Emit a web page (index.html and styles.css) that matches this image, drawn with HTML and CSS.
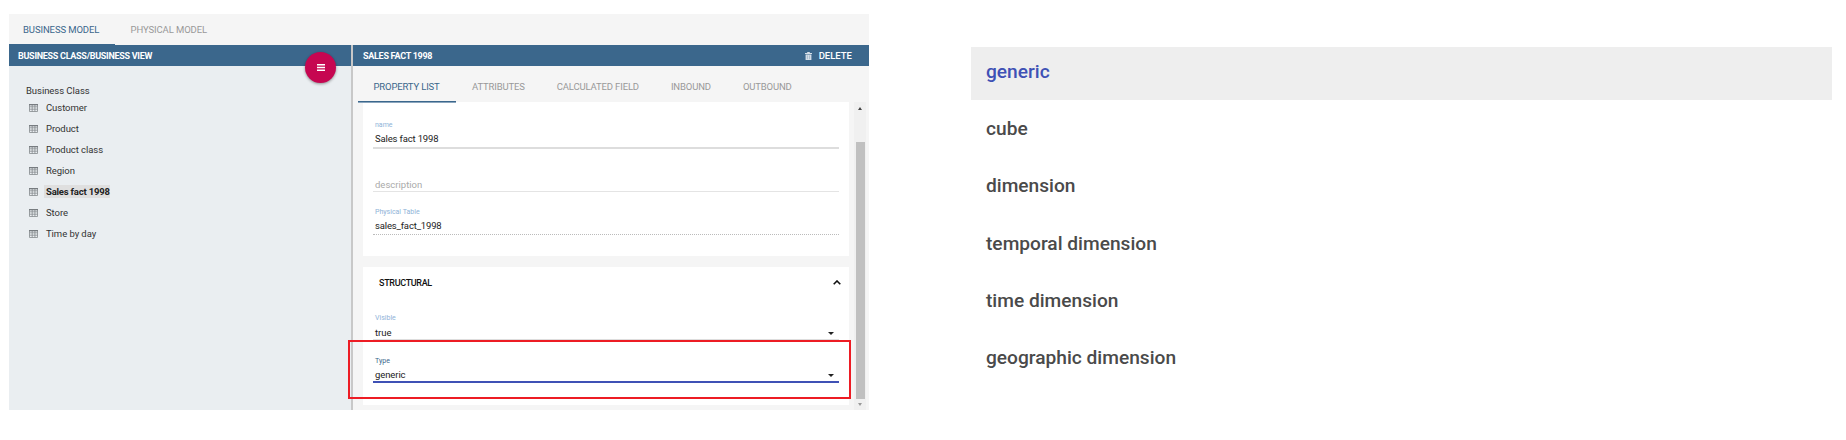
FILE: index.html
```html
<!DOCTYPE html>
<html lang="en">
<head>
<meta charset="utf-8">
<title>Business Model</title>
<link rel="stylesheet" href="styles.css">
</head>
<body>
<svg class="defs" aria-hidden="true">
  <symbol id="grid" viewBox="0 0 9 8"><path d="M.5 .5h8v7h-8zM.5 2.800h8M.5 5.200h8M3.200 1v6.500M5.900 1v6.500" fill="none" stroke="#858a8e" stroke-width=".8"/><path d="M0 0h9v1.300H0z" fill="#777c80"/></symbol>
</svg>
<main class="page">
  <section class="app">
    <nav class="model-tabs">
      <span class="model-tab active">BUSINESS MODEL</span>
      <span class="model-tab">PHYSICAL MODEL</span>
    </nav>
    <div class="panels">
      <aside class="left">
        <header class="bar">BUSINESS CLASS/BUSINESS VIEW</header>
        <button class="fab" aria-label="Menu"><svg width="8" height="7" viewBox="0 0 8 7"><path d="M0 .7h8M0 3.500h8M0 6.300h8" stroke="#fff" stroke-width="1.400"/></svg></button>
        <div class="tree-title">Business Class</div>
        <ul class="tree">
          <li><svg><use href="#grid"/></svg><span>Customer</span></li>
          <li><svg><use href="#grid"/></svg><span>Product</span></li>
          <li><svg><use href="#grid"/></svg><span>Product class</span></li>
          <li><svg><use href="#grid"/></svg><span>Region</span></li>
          <li class="selected"><svg><use href="#grid"/></svg><span>Sales fact 1998</span></li>
          <li><svg><use href="#grid"/></svg><span>Store</span></li>
          <li><svg><use href="#grid"/></svg><span>Time by day</span></li>
        </ul>
      </aside>
      <section class="right">
        <header class="bar"><span>SALES FACT 1998</span>
          <span class="delete"><svg width="7" height="8" viewBox="0 0 7 8"><path d="M0 1h2.2V0h2.6v1H7v1H0zM.6 2.6h5.8V8H.6z" fill="#d5dfe8"/><path d="M2.4 3.4v3.8M4.6 3.4v3.8" stroke="#8aa3b9" stroke-width=".6"/></svg><b>DELETE</b></span>
        </header>
        <nav class="tabs">
          <span class="tab active">PROPERTY LIST</span><span class="tab">ATTRIBUTES</span><span class="tab">CALCULATED FIELD</span><span class="tab">INBOUND</span><span class="tab">OUTBOUND</span>
        </nav>
        <div class="scroll">
          <div class="cards">
            <div class="card general">
              <div class="field name"><label>name</label><p>Sales fact 1998</p></div>
              <div class="field description"><p>description</p></div>
              <div class="field table"><label>Physical Table</label><p>sales_fact_1998</p></div>
            </div>
            <div class="card structural">
              <h2><span>STRUCTURAL</span><svg width="8" height="5" viewBox="0 0 8 5"><path d="M.7 4.3 4 1l3.300 3.300" fill="none" stroke="#111" stroke-width="1.6"/></svg></h2>
              <div class="field visible"><label>Visible</label><p>true<i class="caret"></i></p></div>
              <div class="field type"><label>Type</label><p>generic<i class="caret"></i></p></div>
              <div class="highlight"></div>
            </div>
          </div>
          <div class="scrollbar"><i class="up"></i><div class="thumb"></div><i class="down"></i></div>
        </div>
      </section>
    </div>
  </section>
  <ul class="options">
    <li class="current">generic</li>
    <li>cube</li>
    <li>dimension</li>
    <li>temporal dimension</li>
    <li>time dimension</li>
    <li>geographic dimension</li>
  </ul>
</main>
</body>
</html>
```
FILE: styles.css
```css
* { box-sizing: border-box; }
body { margin: 0; background: #fff; font-family: Roboto, "Liberation Sans", sans-serif; font-size: 9.5px; color: #333; }
ul, p, h2 { margin: 0; padding: 0; list-style: none; }
.defs { position: absolute; width: 0; height: 0; }
.page { display: flex; height: 440px; padding: 14px 0 0 9px; align-items: flex-start; overflow: hidden; }
.app { width: 860px; height: 396px; background: #f5f5f5; display: flex; flex-direction: column; }
.model-tabs { height: 31px; display: flex; }
.model-tab { height: 31px; padding: 0 16px 0 14px; line-height: 31px; color: #999; width: 106px; white-space: nowrap; letter-spacing: -.1px; }
.model-tab + .model-tab { padding-left: 15.500px; }
.model-tab.active { color: #3b678c; border-bottom: 1px solid #3b678c; }
.panels { display: flex; height: 365px; }
.left { position: relative; width: 344px; background: #eaeef1; }
.left::after { content: ""; position: absolute; inset: 0 0 0 auto; width: 2px; background: #c8c8c8; }
.bar { height: 21px; background: #3b678c; color: #fff; font-weight: 700; font-size: 9px; line-height: 22px; padding-left: 9px; white-space: nowrap; letter-spacing: -.28px; }
.fab { position: absolute; left: 296px; top: 7px; width: 31px; height: 31px; border: 0; padding: 0; border-radius: 50%; background: #c60651; display: flex; align-items: center; justify-content: center; box-shadow: 0 1px 3px rgba(0,0,0,.4); }
.tree-title { margin: 18px 0 0 17px; height: 13px; line-height: 14px; letter-spacing: -.05px; }
.tree { margin-left: 20px; }
.tree li { height: 21px; display: flex; align-items: center; gap: 6px; }
.tree svg { width: 9px; height: 8px; }
.tree span { padding: 0 0 0 2px; line-height: 13px; white-space: nowrap; letter-spacing: -.06px; }
.tree .selected span { background: #dfdfdf; font-weight: 700; color: #222; letter-spacing: -.2px; }
.right { flex: 1; min-width: 0; }
.right .bar { display: flex; justify-content: space-between; padding: 0 17px 0 10px; }
.delete { display: flex; align-items: center; gap: 7px; letter-spacing: 0; }
.delete b { font-weight: 500; font-size: 9.5px; }
.tabs { height: 36px; display: flex; padding-left: 5px; }
.tab { padding: 0 16px; line-height: 42px; height: 36px; color: #999; font-size: 9.5px; white-space: nowrap; letter-spacing: -.15px; }
.tab.active { color: #3b678c; border-bottom: 1px solid #3b678c; box-shadow: 0 1px #8aa5bd; width: 98px; padding-left: 15.500px; position: relative; }
.scroll { display: flex; height: 308px; }
.cards { margin-left: 10px; width: 486px; }
.card { background: #fff; padding: 0 10px; }
.general { height: 154px; }
.structural { height: 138px; margin-top: 11px; position: relative; }
.field { display: flex; flex-direction: column; justify-content: flex-end; padding-left: 2px; }
.field label { font-size: 7px; line-height: 8px; color: #8fb3d8; }
.field p { line-height: 12px; position: relative; }
.name { height: 47px; border-bottom: 2px solid #ddd; }
.name p { margin: 4px 0 2px; }
.name p, .table p { letter-spacing: -.15px; }
.name p, .table p, .visible p, .type p { color: #222; }
.description { height: 43px; border-bottom: 1px solid #e4e4e4; }
.description p { color: #aaa; margin: 0; font-size: 9.5px; }
.table { height: 43px; border-bottom: 1px dotted #bbb; }
.table p { margin: 4px 0 2px; }
.structural h2 { height: 31px; padding: 0 0 0 6px; margin-right: -2px; display: flex; align-items: center; justify-content: space-between; font-size: 9px; font-weight: 500; color: #111; letter-spacing: -.32px; }
.visible { height: 42px; border-bottom: 1px solid #ddd; }
.visible p { margin: 5px 0 0; }
.type { height: 43px; border-bottom: 2px solid #3f51b5; }
.type label { color: #3b678c; }
.type p { margin: 4px 0 0; letter-spacing: -.1px; }
.caret { position: absolute; right: 5px; top: 5px; border: 3px solid transparent; border-top-color: #222; border-bottom: 0; }
.highlight { position: absolute; left: -15px; top: 73px; width: 503px; height: 59px; border: 2px solid #ed1c24; }
.scrollbar { margin-left: 5px; width: 12px; background: #f0f0f0; display: flex; flex-direction: column; align-items: center; }
.up { margin: 5px 0 32px; border: 2.500px solid transparent; border-bottom: 3px solid #444; border-top: 0; }
.thumb { width: 9px; height: 257px; background: #c0c0c0; }
.down { margin-top: 4px; border: 2.500px solid transparent; border-top: 3px solid #999; border-bottom: 0; }
.options { margin: 33px 0 0 102px; width: 861px; font-size: 19.150px; font-weight: 500; color: #4a4a4a; display: flex; flex-direction: column; gap: 4.200px; }
.options li { height: 53px; line-height: 50px; padding-left: 15px; }
.current { background: #eee; color: #3f51b5; }
```
